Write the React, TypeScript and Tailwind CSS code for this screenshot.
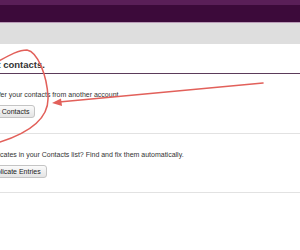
import { FC } from 'react';

const Btn: FC<{ label: string; className?: string }> = ({ label, className }) => (
  <button
    className={`block rounded-[3px] border border-[#c4c4c4] bg-gradient-to-b from-[#fbfbfb] to-[#e4e4e4] px-[5px] py-px text-[7px] leading-[9px] text-[#222] whitespace-nowrap ${className ?? ''}`}
  >
    {label}
  </button>
);

const Annotation: FC = () => (
  <svg
    className="pointer-events-none absolute left-0 top-0"
    width={300}
    height={250}
    viewBox="0 0 300 250"
  >
    {/* hand drawn circle round the button */}
    <path
      d="M -3 62 C 8 56, 18 50, 27 50 C 38 52, 47 76, 48 97 C 49 117, 31 132, 0 142"
      fill="none"
      stroke="#e2605a"
      strokeWidth={1.5}
      strokeLinecap="round"
    />
    {/* arrow */}
    <line x1={59} y1={102} x2={263} y2={83} stroke="#e2605a" strokeWidth={1.6} strokeLinecap="round" />
    <polygon points="52,103 61,98.5 62,106" fill="#e2605a" />
  </svg>
);

export default function App() {
  return (
    <div className="relative h-[250px] w-[300px] overflow-hidden bg-white font-['Liberation_Sans',Arial,sans-serif] text-[#333]">
      {/* top bars */}
      <div className="h-[5px] bg-[#5a1f58]" />
      <div className="h-[17px] bg-[#3c0a3a]" />
      <div className="h-px bg-[#b99bb7]" />
      <div className="h-[21px] bg-[#dedede]" />

      {/* heading */}
      <h2 className="mt-[15px] border-b border-[#5b3b5a] pb-[2px] text-[9.5px] font-bold leading-[12px] whitespace-nowrap">
        <span className="-ml-[29px] block">Import contacts.</span>
      </h2>

      {/* import section */}
      <section className="border-b border-[#e2e2e2] pt-[16px] pb-[15px]">
        <p className="-ml-[19px] text-[7px] leading-[9px] whitespace-nowrap">
          Transfer your contacts from another account.
        </p>
        <Btn label="Import Contacts" className="mt-[6px] -ml-[26px]" />
      </section>

      {/* duplicates section */}
      <section className="border-b border-[#e2e2e2] pt-[16px] pb-[14px]">
        <p className="-ml-[33px] text-[7px] leading-[9px] whitespace-nowrap">
          Have duplicates in your Contacts list? Find and fix them automatically.
        </p>
        <Btn label="Merge Duplicate Entries" className="mt-[6px] -ml-[40px]" />
      </section>

      <Annotation />
    </div>
  );
}
